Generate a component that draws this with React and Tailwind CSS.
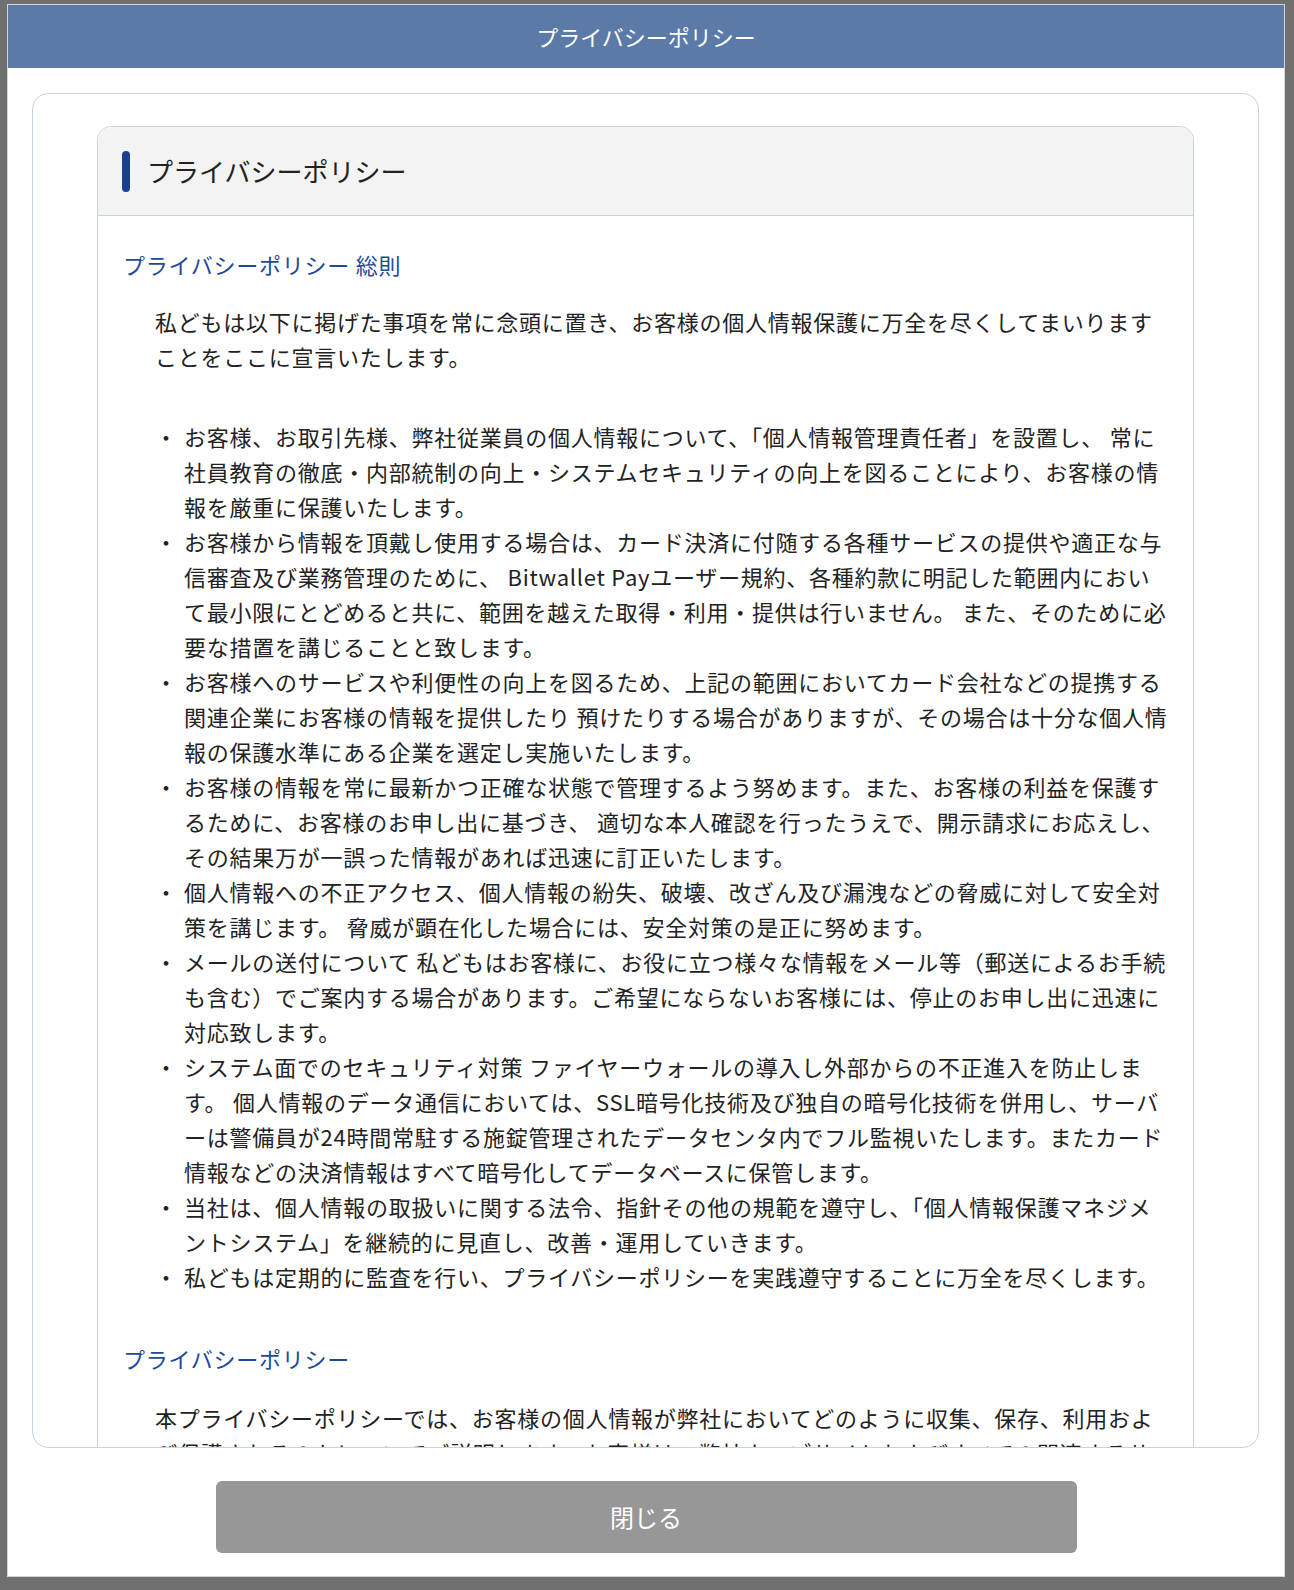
const items = [
  [
    'お客様、お取引先様、弊社従業員の個人情報について、「個人情報管理責任者」を設置し、 常に',
    '社員教育の徹底・内部統制の向上・システムセキュリティの向上を図ることにより、お客様の情',
    '報を厳重に保護いたします。',
  ],
  [
    'お客様から情報を頂戴し使用する場合は、カード決済に付随する各種サービスの提供や適正な与',
    '信審査及び業務管理のために、 Bitwallet Payユーザー規約、各種約款に明記した範囲内におい',
    'て最小限にとどめると共に、範囲を越えた取得・利用・提供は行いません。 また、そのために必',
    '要な措置を講じることと致します。',
  ],
  [
    'お客様へのサービスや利便性の向上を図るため、上記の範囲においてカード会社などの提携する',
    '関連企業にお客様の情報を提供したり 預けたりする場合がありますが、その場合は十分な個人情',
    '報の保護水準にある企業を選定し実施いたします。',
  ],
  [
    'お客様の情報を常に最新かつ正確な状態で管理するよう努めます。また、お客様の利益を保護す',
    'るために、お客様のお申し出に基づき、 適切な本人確認を行ったうえで、開示請求にお応えし、',
    'その結果万が一誤った情報があれば迅速に訂正いたします。',
  ],
  [
    '個人情報への不正アクセス、個人情報の紛失、破壊、改ざん及び漏洩などの脅威に対して安全対',
    '策を講じます。 脅威が顕在化した場合には、安全対策の是正に努めます。',
  ],
  [
    'メールの送付について 私どもはお客様に、お役に立つ様々な情報をメール等（郵送によるお手続',
    'も含む）でご案内する場合があります。ご希望にならないお客様には、停止のお申し出に迅速に',
    '対応致します。',
  ],
  [
    'システム面でのセキュリティ対策 ファイヤーウォールの導入し外部からの不正進入を防止しま',
    'す。 個人情報のデータ通信においては、SSL暗号化技術及び独自の暗号化技術を併用し、サーバ',
    'ーは警備員が24時間常駐する施錠管理されたデータセンタ内でフル監視いたします。またカード',
    '情報などの決済情報はすべて暗号化してデータベースに保管します。',
  ],
  [
    '当社は、個人情報の取扱いに関する法令、指針その他の規範を遵守し、「個人情報保護マネジメ',
    'ントシステム」を継続的に見直し、改善・運用していきます。',
  ],
  ['私どもは定期的に監査を行い、プライバシーポリシーを実践遵守することに万全を尽くします。'],
]

function Lines({ lines }) {
  return lines.map((line, i) => (
    <span key={i} className="block whitespace-nowrap">
      {line}
    </span>
  ))
}

export default function App() {
  return (
    <div className="h-[1590px] bg-[#707070] pt-[4px] pl-[7px] pr-[9px] font-['Noto_Sans_CJK_JP',sans-serif] text-[#222]">
      <div className="h-[1573px] bg-white border border-[#d6d6d6] flex flex-col">
        {/* Modal header */}
        <div className="h-[63px] shrink-0 bg-[#5b7aa8] flex items-center justify-center">
          <span className="text-[22px] text-white">プライバシーポリシー</span>
        </div>

        {/* Scroll area */}
        <div className="pl-[24px] pr-[25px] pt-[25px]">
          <div className="h-[1355px] border border-[#c9d3e0] rounded-[16px] overflow-hidden px-[64px] pt-[32px]">
            <div className="border border-[#c9d3e0] rounded-t-[14px] min-h-[1400px]">
              <div className="h-[89px] bg-[#f3f3f3] border-b border-[#c9d3e0] rounded-t-[14px] flex items-center pl-[24px]">
                <span className="w-[8px] h-[41px] rounded-full bg-[#1b3f8f]" />
                <h1 className="ml-[17px] text-[26px] leading-none">プライバシーポリシー</h1>
              </div>

              <div className="pl-[25px] pt-[31px] text-[22px] leading-[35px] tracking-[0.75px]">
                <h2 className="text-[#1d4a9c]">プライバシーポリシー 総則</h2>
                <p className="mt-[22px] ml-[32px]">
                  <Lines
                    lines={[
                      '私どもは以下に掲げた事項を常に念頭に置き、お客様の個人情報保護に万全を尽くしてまいります',
                      'ことをここに宣言いたします。',
                    ]}
                  />
                </p>

                <ul className="mt-[45px] ml-[32px]">
                  {items.map((lines, i) => (
                    <li key={i} className="flex">
                      <span className="w-[29px] shrink-0">・</span>
                      <div>
                        <Lines lines={lines} />
                      </div>
                    </li>
                  ))}
                </ul>

                <h2 className="mt-[47px] text-[#1d4a9c]">プライバシーポリシー</h2>
                <p className="mt-[24px] ml-[32px]">
                  <Lines
                    lines={[
                      '本プライバシーポリシーでは、お客様の個人情報が弊社においてどのように収集、保存、利用およ',
                      'び保護されるのかについてご説明します。お客様は、弊社ウェブサイトおよびすべての関連するサ',
                    ]}
                  />
                </p>
              </div>
            </div>
          </div>
        </div>

        {/* Footer button */}
        <div className="pt-[33px] flex justify-center">
          <button className="w-[861px] h-[72px] rounded-[6px] bg-[#979797] text-white text-[24px]">
            閉じる
          </button>
        </div>
      </div>
    </div>
  )
}
